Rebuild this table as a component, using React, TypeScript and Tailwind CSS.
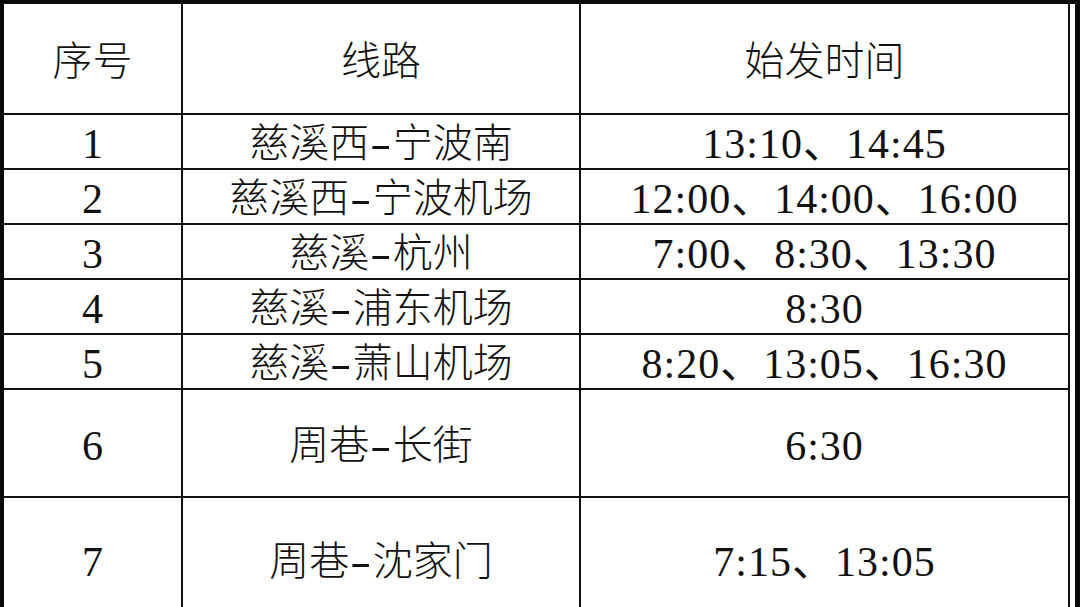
import React from 'react';

interface Route {
  id: number;
  from: string;
  to: string;
  times: string;
  height: string;
}

const routes: Route[] = [
  { id: 1, from: '慈溪西', to: '宁波南', times: '13:10、14:45', height: 'h-[53px]' },
  { id: 2, from: '慈溪西', to: '宁波机场', times: '12:00、14:00、16:00', height: 'h-[53px]' },
  { id: 3, from: '慈溪', to: '杭州', times: '7:00、8:30、13:30', height: 'h-[53px]' },
  { id: 4, from: '慈溪', to: '浦东机场', times: '8:30', height: 'h-[53px]' },
  { id: 5, from: '慈溪', to: '萧山机场', times: '8:20、13:05、16:30', height: 'h-[53px]' },
  { id: 6, from: '周巷', to: '长街', times: '6:30', height: 'h-[106px]' },
  { id: 7, from: '周巷', to: '沈家门', times: '7:15、13:05', height: 'h-[122px]' },
];

const cell = 'bg-white flex items-center justify-center text-[#111] leading-none';

export default function App() {
  return (
    <div
      className="w-[1080px] h-[607px] overflow-hidden bg-[#0a0a0a] pt-1 pl-1 pr-[5px]"
      style={{ fontFamily: '"Liberation Serif", "Noto Sans CJK SC", serif' }}
    >
      <div className="bg-white pr-[5px] h-full">
        <div className="grid grid-cols-[177px_396px_487px] gap-[2px] bg-[#111] pr-[2px]">
          {/* 表头 */}
          <div className={`${cell} h-[109px] text-[40px] font-light pt-[6px]`}>序号</div>
          <div className={`${cell} h-[109px] text-[40px] font-light pt-[6px]`}>线路</div>
          <div className={`${cell} h-[109px] text-[40px] font-light pt-[6px]`}>始发时间</div>

          {routes.map((r) => (
            <React.Fragment key={r.id}>
              <div className={`${cell} ${r.height} text-[42px] pt-[5px]`}>{r.id}</div>
              <div className={`${cell} ${r.height} text-[40px] font-light pt-[5px]`}>
                {r.from}
                <span className="inline-block scale-x-[1.6] px-[5px] font-normal">-</span>
                {r.to}
              </div>
              <div className={`${cell} ${r.height} text-[42px] tracking-[1px] pt-[5px]`}>{r.times}</div>
            </React.Fragment>
          ))}
        </div>
      </div>
    </div>
  );
}
